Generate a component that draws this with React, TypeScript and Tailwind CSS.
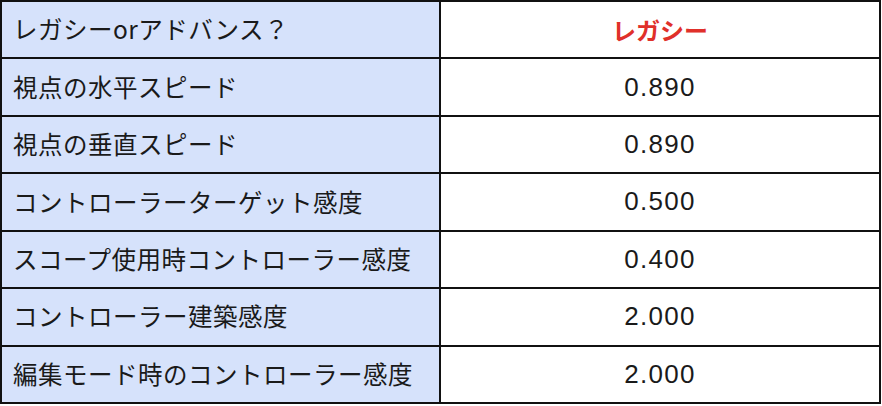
const rows: { label: string; value: string; highlight?: boolean }[] = [
  { label: 'レガシーorアドバンス？', value: 'レガシー', highlight: true },
  { label: '視点の水平スピード', value: '0.890' },
  { label: '視点の垂直スピード', value: '0.890' },
  { label: 'コントローラーターゲット感度', value: '0.500' },
  { label: 'スコープ使用時コントローラー感度', value: '0.400' },
  { label: 'コントローラー建築感度', value: '2.000' },
  { label: '編集モード時のコントローラー感度', value: '2.000' },
];

export default function App() {
  return (
    <div className="w-[882px] h-[406px] bg-white">
      <div className="w-[881px] h-[404px] border-2 border-[#111] flex flex-col font-['Noto_Sans_CJK_JP',sans-serif] text-[#1a1a1a]">
        {rows.map((row, i) => (
          <div
            key={i}
            className={`flex flex-1 ${i < rows.length - 1 ? 'border-b-2 border-[#111]' : ''}`}
          >
            <div className="w-[439px] shrink-0 border-r-2 border-[#111] bg-[#d6e2fb] flex items-center pl-[11px] text-[24.5px] tracking-[0.5px]">
              {row.label}
            </div>
            <div className="flex-1 flex items-center justify-center">
              {row.highlight ? (
                <span className="text-[#e0302a] font-bold text-[24px]">{row.value}</span>
              ) : (
                <span className="font-['Liberation_Sans','Noto_Sans_CJK_JP',sans-serif] text-[26px] tracking-[1.3px]">
                  {row.value}
                </span>
              )}
            </div>
          </div>
        ))}
      </div>
    </div>
  );
}
